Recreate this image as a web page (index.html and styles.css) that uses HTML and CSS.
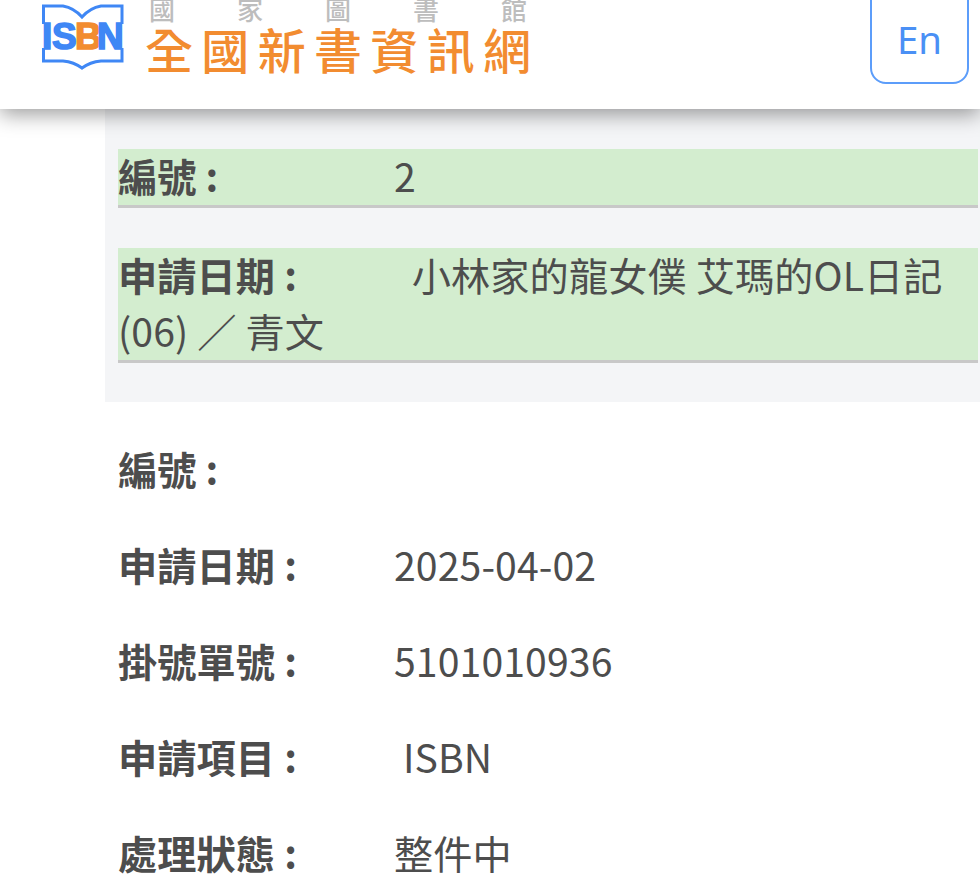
FILE: index.html
```html
<!DOCTYPE html>
<html lang="zh-Hant">
<head>
  <meta charset="UTF-8" />
  <meta name="viewport" content="width=device-width, initial-scale=1.0"/>
  <title>全國新書資訊網</title>
  <link rel="stylesheet" href="styles.css">
</head>
<body>
  <header class="header">
    <div class="logo">
      <svg class="logo-book" width="82" height="66" viewBox="0 0 82 66">
        <path class="book-line" d="M1.5 20V2H21Q32 4 40 13Q48 4 59 2H80V20M1.5 44V57H21Q32 58 40 64Q48 58 59 57H80V44"/>
        <text class="book-letter" x="0" y="45">I</text>
        <text class="book-letter" x="10" y="45">S</text>
        <text class="book-letter book-orange" x="33" y="45">B</text>
        <text class="book-letter" x="55" y="45">N</text>
      </svg>
      <div class="logo-text">
        <div class="logo-top"><span>國</span><span>家</span><span>圖</span><span>書</span><span>館</span></div>
        <div class="logo-name"><span>全</span><span>國</span><span>新</span><span>書</span><span>資</span><span>訊</span><span>網</span></div>
      </div>
    </div>
    <button class="lang-button">En</button>
  </header>

  <div class="panel">
    <div class="row row-green"><div class="row-text"><strong class="label">編號 :</strong>2</div></div>
    <div class="row row-green"><div class="row-text"><strong class="label">申請日期 :</strong>&nbsp;&nbsp;小林家的龍女僕 艾瑪的OL日記 (06) ／ 青文</div></div>
  </div>

  <div class="details">
    <div class="row"><strong class="label">編號 :</strong></div>
    <div class="row"><strong class="label">申請日期 :</strong>2025-04-02</div>
    <div class="row"><strong class="label">掛號單號 :</strong>5101010936</div>
    <div class="row"><strong class="label">申請項目 :</strong>&nbsp;ISBN</div>
    <div class="row"><strong class="label">處理狀態 :</strong>整件中</div>
  </div>
</body>
</html>
```

FILE: styles.css
```css
html, body {
  height: 875px;
  overflow: hidden;
}
body {
  margin: 0;
  background-color: white;
  color: #4d4d4d;
  font-family: "Noto Sans CJK TC", "Noto Sans", sans-serif;
  font-size: 39.2px;
}
.header {
  position: relative;
  z-index: 2;
  display: flex;
  justify-content: space-between;
  align-items: flex-end;
  height: 109px;
  padding: 0 11px 25px 42px;
  box-sizing: border-box;
  background-color: white;
  box-shadow: 0 5px 20px rgba(0, 0, 0, 0.4);
}
.logo {
  display: flex;
  align-items: flex-end;
  gap: 22px;
  margin-bottom: 12px;
}
.logo-book {
  margin-bottom: 2px;
  flex: none;
}
.book-line {
  fill: none;
  stroke: #3f87f5;
  stroke-width: 3;
}
.book-letter {
  fill: #3f87f5;
  stroke: #3f87f5;
  stroke-width: 1.6;
  font-family: "Liberation Sans", sans-serif;
  font-size: 37px;
  font-weight: bold;
}
.book-orange {
  fill: #f28c30;
  stroke: #f28c30;
}
.logo-text {
  width: 386px;
  margin-left: -1px;
}
.logo-top,
.logo-name {
  display: flex;
  justify-content: space-between;
}
.logo-top {
  width: 378px;
  margin-left: 4px;
  margin-bottom: 3px;
  height: 24px;
  line-height: 24px;
  font-size: 26px;
  font-weight: 500;
  color: #bdbdbd;
}
.logo-name {
  height: 48px;
  line-height: 48px;
  font-size: 48px;
  font-weight: 500;
  color: #f28c30;
}
.lang-button {
  width: 99px;
  height: 110px;
  flex: none;
  border: 2px solid #5c9dfa;
  border-radius: 16px;
  background-color: white;
  padding: 20px 0 0;
  color: #4a90f5;
  font-family: "Noto Sans", sans-serif;
  font-size: 38.4px;
}
.panel {
  margin-left: 105px;
  padding: 40px 2px 39px 13px;
  background-color: #f4f5f7;
}
.details {
  padding: 38px 0 0 118px;
}
.row {
  display: flow-root;
  line-height: 56px;
  margin-bottom: 40px;
  letter-spacing: 0.1px;
}
.row-text {
  margin: -2px 0 2px;
}
.row-green {
  margin-bottom: 40px;
  background-color: #d3edcf;
  border-bottom: 3px solid #c8c8c8;
}
.row-green:last-child {
  margin-bottom: 0;
}
.label {
  display: inline-block;
  width: 276px;
  font-weight: bold;
}
```
